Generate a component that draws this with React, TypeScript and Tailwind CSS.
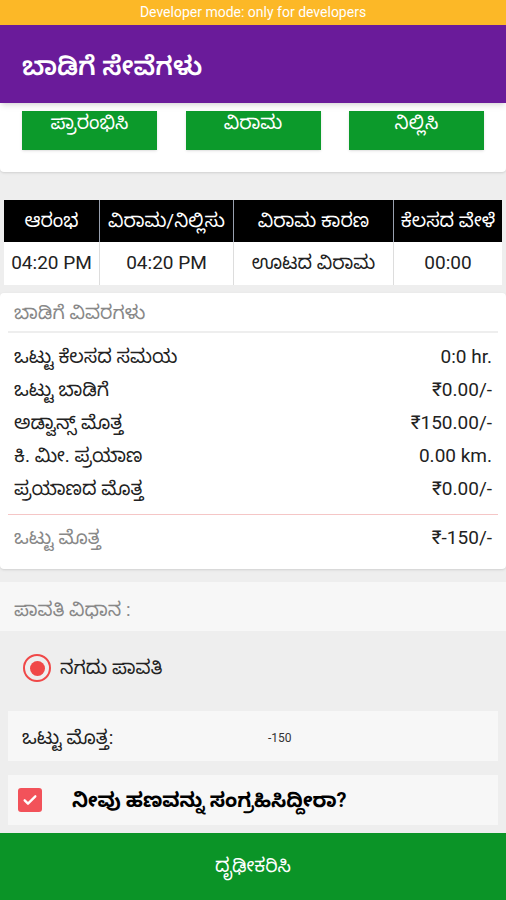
const rows = [
  { label: 'ಒಟ್ಟು ಕೆಲಸದ ಸಮಯ', value: '0:0 hr.' },
  { label: 'ಒಟ್ಟು ಬಾಡಿಗೆ', value: '₹0.00/-' },
  { label: 'ಅಡ್ವಾನ್ಸ್ ಮೊತ್ತ', value: '₹150.00/-' },
  { label: 'ಕಿ. ಮೀ. ಪ್ರಯಾಣ', value: '0.00 km.' },
  { label: 'ಪ್ರಯಾಣದ ಮೊತ್ತ', value: '₹0.00/-' },
];

const font = { fontFamily: 'Roboto, "Noto Sans Kannada", "Noto Sans", "Liberation Sans", sans-serif' };

const App = () => {
  return (
    <div className="w-[506px] h-[900px] bg-[#eeeeee] flex flex-col overflow-hidden" style={font}>
      {/* Developer banner */}
      <div className="h-[25px] bg-[#fcb827] flex items-center justify-center text-white text-[14px]">
        Developer mode: only for developers
      </div>

      {/* Header */}
      <div className="h-[78px] bg-[#6a1b9a] flex items-center px-[22px] pt-[4px] shadow-md z-10">
        <h1 className="text-white text-[26px] font-semibold">ಬಾಡಿಗೆ ಸೇವೆಗಳು</h1>
      </div>

      {/* Action buttons */}
      <div className="bg-white h-[69px] rounded-b shadow flex justify-between px-[22px] pt-[8px]">
        {['ಪ್ರಾರಂಭಿಸಿ', 'ವಿರಾಮ', 'ನಿಲ್ಲಿಸಿ'].map((t) => (
          <button
            key={t}
            className="w-[135px] h-[39px] bg-[#0c9a2b] text-white text-[19px] flex justify-center pt-[2px] leading-[20px] shadow"
          >
            {t}
          </button>
        ))}
      </div>

      {/* Work table */}
      <div className="mt-[28px] mx-[4px]">
        <div className="grid grid-cols-[96px_134px_160px_1fr] bg-black text-white text-[19px] h-[42px]">
          <div className="flex items-center justify-center border-r border-gray-400">ಆರಂಭ</div>
          <div className="flex items-center justify-center border-r border-gray-400">ವಿರಾಮ/ನಿಲ್ಲಿಸು</div>
          <div className="flex items-center justify-center border-r border-gray-400">ವಿರಾಮ ಕಾರಣ</div>
          <div className="flex items-center justify-center">ಕೆಲಸದ ವೇಳೆ</div>
        </div>
        <div className="grid grid-cols-[96px_134px_160px_1fr] bg-white text-[#222] text-[19px] h-[43px]">
          <div className="flex items-center justify-center border-r border-[#dddddd]">04:20 PM</div>
          <div className="flex items-center justify-center border-r border-[#dddddd]">04:20 PM</div>
          <div className="flex items-center justify-center border-r border-[#dddddd]">ಊಟದ ವಿರಾಮ</div>
          <div className="flex items-center justify-center">00:00</div>
        </div>
      </div>

      {/* Rent details */}
      <div className="mt-[8px] bg-white rounded shadow h-[276px] px-[8px]">
        <div className="h-[40px] flex items-center px-[6px] pt-[3px] text-[#888888] text-[19px] border-b-2 border-[#eeeeee]">
          ಬಾಡಿಗೆ ವಿವರಗಳು
        </div>
        <div className="pt-[8px] pb-[8px] border-b border-[#f5c6c6]">
          {rows.map((r) => (
            <div key={r.label} className="h-[33px] flex items-center justify-between px-[6px] text-[#222] text-[19px]">
              <span>{r.label}</span>
              <span>{r.value}</span>
            </div>
          ))}
        </div>
        <div className="h-[44px] flex items-center justify-between px-[6px] pt-[3px] text-[19px]">
          <span className="text-[#888888]">ಒಟ್ಟು ಮೊತ್ತ</span>
          <span className="text-[#222]">₹-150/-</span>
        </div>
      </div>

      {/* Payment method */}
      <div className="mt-[13px] h-[49px] bg-[#f7f7f7] flex items-center px-[14px] pt-[8px] text-[#888888] text-[19px]">
        ಪಾವತಿ ವಿಧಾನ :
      </div>

      <div className="h-[72px] flex items-center px-[23px] pt-[2px] gap-[9px]">
        <span className="w-[28px] h-[28px] rounded-full border-[2px] border-[#f04848] flex items-center justify-center">
          <span className="w-[15px] h-[15px] rounded-full bg-[#f04848]" />
        </span>
        <span className="text-[#222] text-[19px]">ನಗದು ಪಾವತಿ</span>
      </div>

      <div className="mx-[8px] mt-[8px] h-[50px] bg-[#f7f7f7] flex items-center px-[14px] pt-[4px]">
        <span className="w-[246px] text-[#222] text-[19px]">ಒಟ್ಟು ಮೊತ್ತ:</span>
        <span className="text-[#333] text-[12px]">-150</span>
      </div>

      <div className="mx-[8px] mt-[14px] h-[50px] bg-[#f7f7f7] flex items-center px-[10px] gap-[30px]">
        <span className="w-[24px] h-[24px] rounded-[3px] bg-[#f2525a] flex items-center justify-center">
          <svg width="16" height="16" viewBox="0 0 24 24" fill="none" stroke="white" strokeWidth="3.5" strokeLinecap="round" strokeLinejoin="round">
            <path d="M4 12.5l5 5L20 6.5" />
          </svg>
        </span>
        <span className="text-black text-[20px] font-bold">ನೀವು ಹಣವನ್ನು ಸಂಗ್ರಹಿಸಿದ್ದೀರಾ?</span>
      </div>

      {/* Confirm */}
      <button className="mt-auto h-[67px] bg-[#0b9427] text-white text-[19px] flex items-center justify-center">
        ದೃಢೀಕರಿಸಿ
      </button>
    </div>
  );
};

export default App;
